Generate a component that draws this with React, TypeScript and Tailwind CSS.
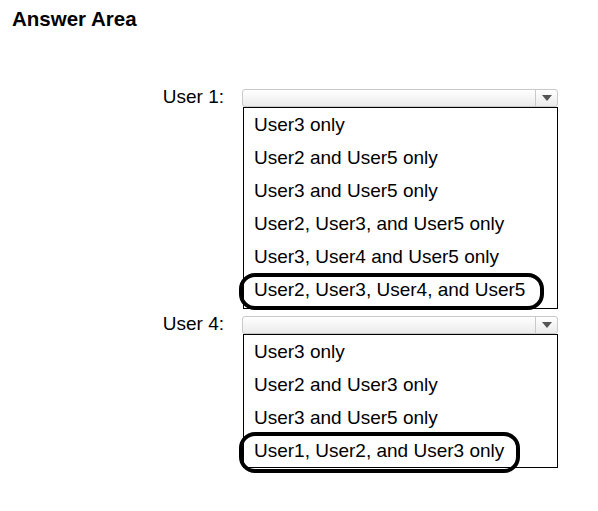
const font = { fontFamily: '"Liberation Sans", Arial, sans-serif' };

const groups = [
  {
    label: "User 1:",
    options: [
      "User3 only",
      "User2 and User5 only",
      "User3 and User5 only",
      "User2, User3, and User5 only",
      "User3, User4 and User5 only",
      "User2, User3, User4, and User5",
    ],
    mark: "left-[-5px] top-[165px] w-[305px] h-[37px]",
    extra: "pb-[2px]",
  },
  {
    label: "User 4:",
    options: ["User3 only", "User2 and User3 only", "User3 and User5 only", "User1, User2, and User3 only"],
    mark: "left-[-5px] top-[97px] w-[281px] h-[41px]",
    extra: "",
  },
];

function SelectBox() {
  return (
    <div className="flex h-[18px] w-[316px] rounded-[3px] border border-[#c9c9c9] bg-gradient-to-b from-white to-[#ebebeb]">
      <div className="flex-1" />
      <div className="flex w-[22px] items-center justify-center border-l border-[#c9c9c9]">
        <div className="h-0 w-0 border-l-[5px] border-r-[5px] border-t-[6px] border-l-transparent border-r-transparent border-t-[#555]" />
      </div>
    </div>
  );
}

export default function App() {
  return (
    <div className="h-[511px] w-[598px] bg-white text-black" style={font}>
      <h1 className="pl-[12px] pt-[7px] text-[20.5px] font-bold leading-[24px]">Answer Area</h1>
      <div className="mt-[58px] flex flex-col gap-[7px] pl-[143px]">
        {groups.map((g, i) => (
          <div key={i} className="flex">
            <div className="mt-[-1px] w-[81px] text-right text-[19px] leading-[18px]">{g.label}</div>
            <div className="ml-[18px] flex flex-col">
              <SelectBox />
              <div className={"relative ml-[1px] w-[315px] border border-black " + g.extra}>
                {g.options.map((o, j) => (
                  <div key={j} className="h-[33px] pl-[10px] text-[19px] leading-[33px] whitespace-nowrap">
                    {o}
                  </div>
                ))}
                <div className={"absolute rounded-[16px] border-[4px] border-black " + g.mark} />
              </div>
            </div>
          </div>
        ))}
      </div>
    </div>
  );
}
